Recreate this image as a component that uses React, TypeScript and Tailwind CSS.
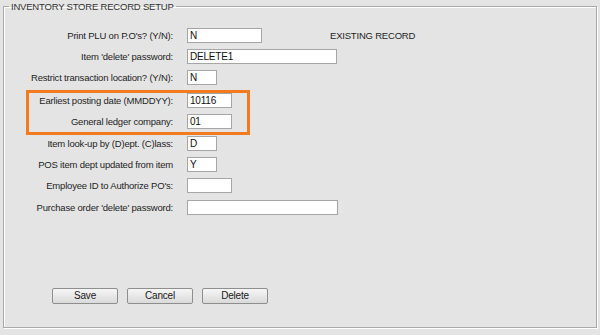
import React from 'react';

type Field = {
  label: string;
  value: string;
  width: string;
  top: string;
  note?: string;
};

const Row = ({ field, labelWidth }: { field: Field; labelWidth: string }) => (
  <div className={`flex items-center h-[15px] ${field.top}`}>
    <div className={`${labelWidth} text-right whitespace-nowrap leading-[15px]`}>{field.label}</div>
    <input
      readOnly
      value={field.value}
      className={`ml-[14px] h-[15px] ${field.width} bg-white border border-[#a6a6a6] px-[2px] text-[10px] tracking-[-0.2px] leading-[13px] text-[#111] outline-none`}
    />
    {field.note && <div className="ml-[68px] leading-[15px] whitespace-nowrap">{field.note}</div>}
  </div>
);

const Button = ({ children }: { children: React.ReactNode }) => (
  <button className="w-[66px] h-[16px] rounded-[2px] border border-[#8e8e8e] bg-gradient-to-b from-[#f6f6f6] to-[#dadada] text-[10px] leading-[14px] text-[#1a1a1a]">
    {children}
  </button>
);

export default function App() {
  const before: Field[] = [
    { label: "Print PLU on P.O's? (Y/N):", value: 'N', width: 'w-[75px]', top: 'mt-[15px]', note: 'EXISTING RECORD' },
    { label: "Item 'delete' password:", value: 'DELETE1', width: 'w-[150px]', top: 'mt-[6px]' },
    { label: 'Restrict transaction location? (Y/N):', value: 'N', width: 'w-[30px]', top: 'mt-[6px]' },
  ];
  const boxed: Field[] = [
    { label: 'Earliest posting date (MMDDYY):', value: '10116', width: 'w-[45px]', top: 'mt-0' },
    { label: 'General ledger company:', value: '01', width: 'w-[45px]', top: 'mt-[6px]' },
  ];
  const after: Field[] = [
    { label: 'Item look-up by (D)ept. (C)lass:', value: 'D', width: 'w-[30px]', top: 'mt-[1px]' },
    { label: 'POS item dept updated from item', value: 'Y', width: 'w-[30px]', top: 'mt-[6px]' },
    { label: "Employee ID to Authorize PO's:", value: '', width: 'w-[45px]', top: 'mt-[6px]' },
    { label: "Purchase order 'delete' password:", value: '', width: 'w-[151px]', top: 'mt-[7px]' },
  ];

  return (
    <div className="w-[600px] h-[335px] bg-[#e4e4e4] text-[9.5px] tracking-[-0.2px] text-[#1e1e1e] font-['Liberation_Sans',Arial,sans-serif] overflow-hidden">
      <fieldset className="ml-[3px] w-[594px] h-[328px] border border-[#a9a9a9] shadow-[inset_1px_1px_0_#fff,1px_1px_0_#fff]">
        <legend className="ml-[5px] px-[2px] leading-[13px] text-[#333]">INVENTORY STORE RECORD SETUP</legend>

        <div className="flex flex-col">
          {before.map((f) => (
            <Row key={f.label} field={f} labelWidth="w-[169px]" />
          ))}
        </div>

        {/* highlighted pair */}
        <div className="ml-[22px] mt-[5px] w-[224px] border-[3px] border-[#f47a20] pb-[3px]">
          {boxed.map((f) => (
            <Row key={f.label} field={f} labelWidth="w-[144px]" />
          ))}
        </div>

        <div className="flex flex-col">
          {after.map((f) => (
            <Row key={f.label} field={f} labelWidth="w-[169px]" />
          ))}
        </div>

        <div className="flex gap-[9px] ml-[48px] mt-[73px]">
          <Button>Save</Button>
          <Button>Cancel</Button>
          <Button>Delete</Button>
        </div>
      </fieldset>
    </div>
  );
}
